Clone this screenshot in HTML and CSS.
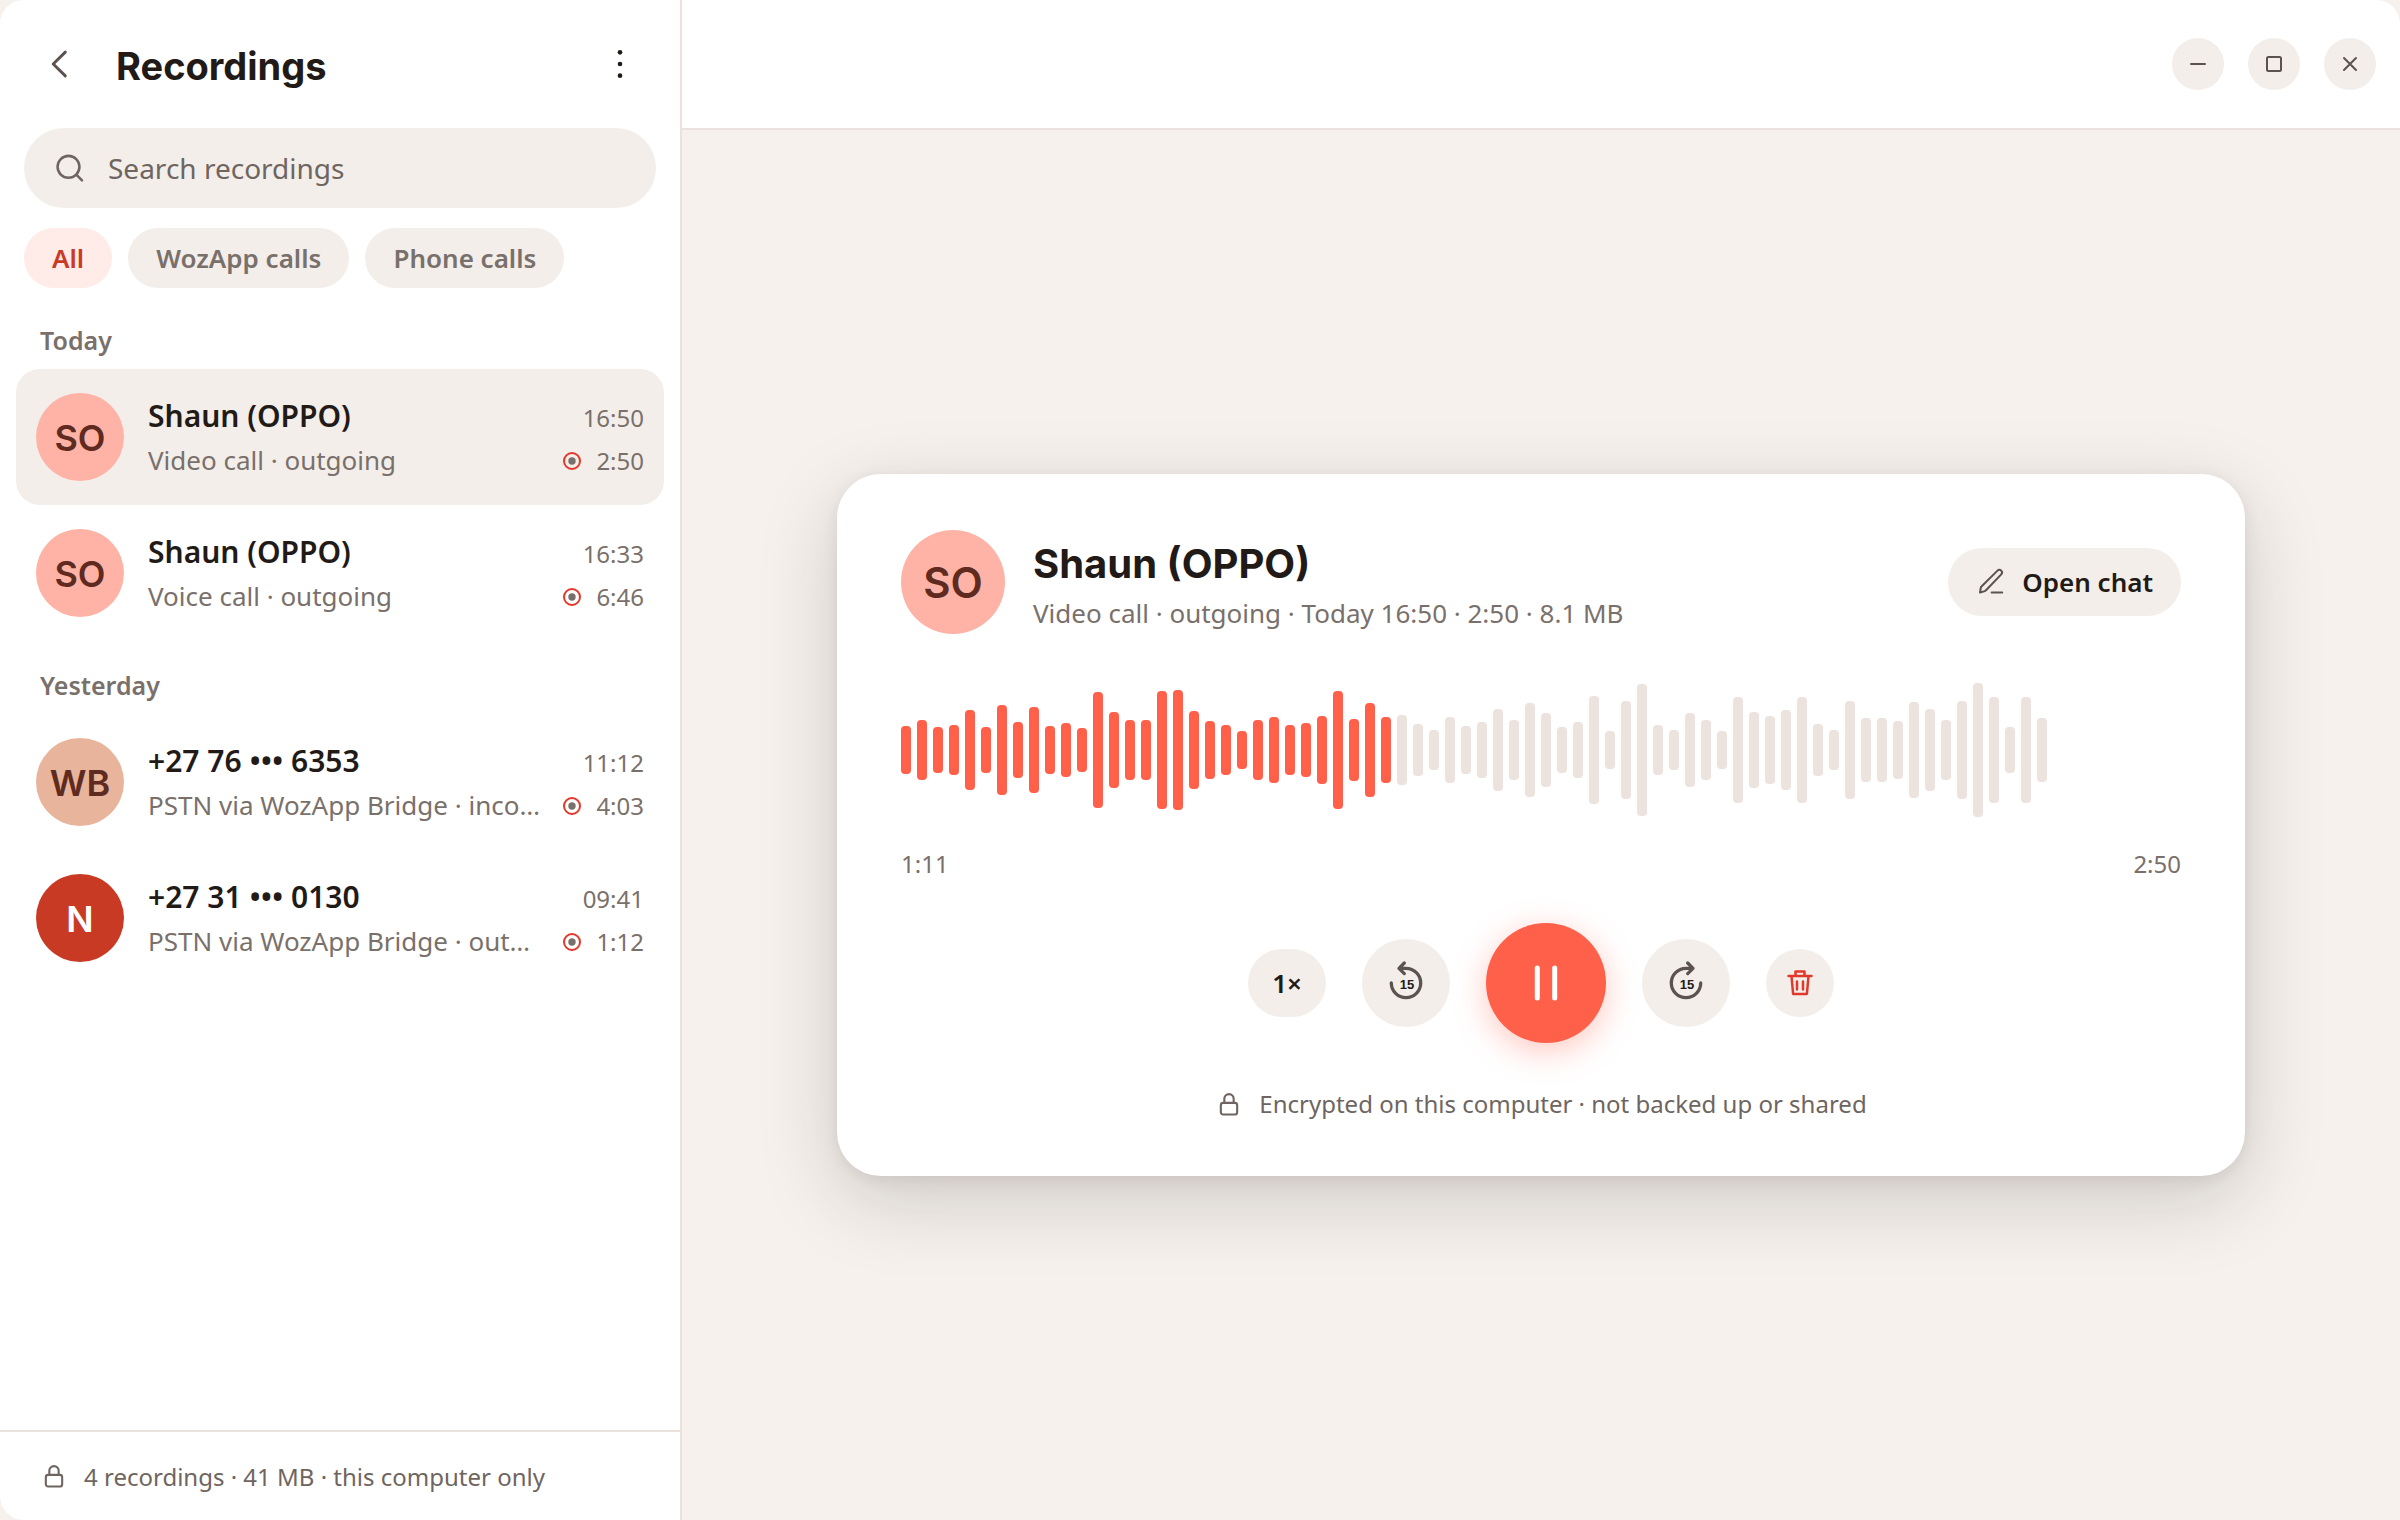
FILE: index.html
```html
<!DOCTYPE html>
<html lang="en">
<head>
<meta charset="utf-8">
<title>Recordings</title>
<meta name="viewport" content="width=device-width, initial-scale=1">
<link rel="stylesheet" href="styles.css">
</head>
<body>
<svg class="sprite" aria-hidden="true">
  <symbol id="lock" viewBox="0 0 24 24"><rect x="5" y="11" width="14" height="10" rx="2"/><path d="M8 11V7.500a4 4 0 0 1 8 0V11"/></symbol>
  <symbol id="record" viewBox="0 0 18 18"><circle cx="9" cy="9" r="8" fill="none" stroke="#e2382c" stroke-width="2"/><circle cx="9" cy="9" r="3.700" fill="currentColor" stroke="none"/></symbol>
</svg>
<div class="window">
  <aside class="sidebar">
    <header class="sidebar-header">
      <button class="icon-button" aria-label="Back"><svg class="icon icon-back" viewBox="0 0 24 24"><path d="M14.900 5.500 8.300 12l6.600 6.500"/></svg></button>
      <h1 class="title">Recordings</h1>
      <button class="icon-button" aria-label="More options"><svg class="icon icon-more" viewBox="0 0 24 24"><circle cx="12" cy="5" r="1.400"/><circle cx="12" cy="12" r="1.400"/><circle cx="12" cy="19" r="1.400"/></svg></button>
    </header>
    <label class="search">
      <svg class="icon icon-search" viewBox="0 0 24 24"><circle cx="11" cy="11.200" r="7.300"/><path d="m20 20.200-3.800-3.800"/></svg>
      <input class="search-input" type="search" placeholder="Search recordings" aria-label="Search recordings">
    </label>
    <div class="chips">
      <button class="chip chip-active">All</button>
      <button class="chip">WozApp calls</button>
      <button class="chip">Phone calls</button>
    </div>
    <div class="list">
      <h2 class="day">Today</h2>
      <button class="item item-selected">
        <span class="avatar">SO</span>
        <span class="item-body">
          <span class="line"><span class="name">Shaun (OPPO)</span><span class="time">16:50</span></span>
          <span class="line"><span class="detail">Video call · outgoing</span><span class="length"><svg class="record"><use href="#record"/></svg>2:50</span></span>
        </span>
      </button>
      <button class="item">
        <span class="avatar">SO</span>
        <span class="item-body">
          <span class="line"><span class="name">Shaun (OPPO)</span><span class="time">16:33</span></span>
          <span class="line"><span class="detail">Voice call · outgoing</span><span class="length"><svg class="record"><use href="#record"/></svg>6:46</span></span>
        </span>
      </button>
      <h2 class="day">Yesterday</h2>
      <button class="item">
        <span class="avatar avatar-sand">WB</span>
        <span class="item-body">
          <span class="line"><span class="name">+27 76 ••• 6353</span><span class="time">11:12</span></span>
          <span class="line"><span class="detail">PSTN via WozApp Bridge · incoming</span><span class="length"><svg class="record"><use href="#record"/></svg>4:03</span></span>
        </span>
      </button>
      <button class="item">
        <span class="avatar avatar-red">N</span>
        <span class="item-body">
          <span class="line"><span class="name">+27 31 ••• 0130</span><span class="time">09:41</span></span>
          <span class="line"><span class="detail">PSTN via WozApp Bridge · outgoing</span><span class="length"><svg class="record"><use href="#record"/></svg>1:12</span></span>
        </span>
      </button>
    </div>
    <footer class="sidebar-footer"><svg class="icon icon-lock"><use href="#lock"/></svg>4 recordings · 41 MB · this computer only</footer>
  </aside>
  <main class="main">
    <header class="titlebar">
      <button class="window-button" aria-label="Minimize"><svg class="icon icon-small" viewBox="0 0 20 20"><path d="M3 10h14"/></svg></button>
      <button class="window-button" aria-label="Maximize"><svg class="icon icon-small" viewBox="0 0 20 20"><rect x="3" y="3" width="14" height="14" rx="1.500"/></svg></button>
      <button class="window-button" aria-label="Close"><svg class="icon icon-small" viewBox="0 0 20 20"><path d="m4 4 12 12M16 4 4 16"/></svg></button>
    </header>
    <div class="stage">
      <section class="card">
        <header class="card-header">
          <span class="avatar avatar-large">SO</span>
          <div class="card-heading">
            <h2 class="card-title">Shaun (OPPO)</h2>
            <p class="card-detail">Video call · outgoing · Today 16:50 · 2:50 · 8.1 MB</p>
          </div>
          <button class="open-chat"><svg class="icon icon-pen" viewBox="0 0 24 24"><path d="M3.200 20.400l.6-3.600c.1-.6.4-1 .8-1.400L17.200 2.900a2 2 0 0 1 3 0 2.200 2.200 0 0 1 0 3L8.200 18.400c-.5.5-1 .9-1.700 1.100zM12.500 20.400h8.500"/></svg>Open chat</button>
        </header>
        <div class="wave" id="wave" role="img" aria-label="Waveform"></div>
        <div class="times"><span>1:11</span><span>2:50</span></div>
        <div class="controls">
          <button class="control control-speed">1×</button>
          <button class="control control-skip" aria-label="Back 15 seconds"><svg class="icon icon-skip" viewBox="0 0 48 48"><path d="M9.300 24A14.700 14.700 0 1 0 24 9.300H17M22.300 4 17 9.300l5.300 5.300"/><text x="25" y="30">15</text></svg></button>
          <button class="control control-play" aria-label="Pause"><svg class="icon icon-pause" viewBox="0 0 48 48"><path d="M15.300 9v30M32.700 9v30"/></svg></button>
          <button class="control control-skip" aria-label="Forward 15 seconds"><svg class="icon icon-skip" viewBox="0 0 48 48"><path d="M38.700 24A14.700 14.700 0 1 1 24 9.300h7M25.700 4 31 9.300l-5.300 5.300"/><text x="25" y="30">15</text></svg></button>
          <button class="control control-delete" aria-label="Delete"><svg class="icon icon-trash" viewBox="0 0 28 28"><path d="M2.500 7h23M9.500 7V2.500h9V7M5.500 7l1.600 18h13.800l1.600-18M11 12.500v8M17 12.500v8"/></svg></button>
        </div>
        <p class="privacy"><svg class="icon icon-lock"><use href="#lock"/></svg>Encrypted on this computer · not backed up or shared</p>
      </section>
    </div>
  </main>
</div>
<script src="wave.js"></script>
</body>
</html>
```
FILE: styles.css
```css
* { box-sizing: border-box; }

:root {
  --ink: #211a17;
  --muted: #7a706b;
  --icon: #5c524e;
  --soft: #f3eeea;
  --line: #ebe2de;
  --canvas: #f6f1ed;
  --coral: #ff604a;
}

body {
  margin: 0;
  background: var(--canvas);
  color: var(--ink);
  font-family: "Noto Sans", sans-serif;
  font-size: 24px;
}

h1, h2, p { margin: 0; }

button {
  border: 0;
  padding: 0;
  background: none;
  color: inherit;
  font: inherit;
}

.sprite { position: absolute; width: 0; height: 0; }

.icon {
  flex: none;
  fill: none;
  stroke: currentColor;
  stroke-width: 2;
  stroke-linecap: round;
  stroke-linejoin: round;
}

.window {
  display: flex;
  min-height: 100vh;
  border-radius: 24px;
  overflow: hidden;
}

/* Sidebar */
.sidebar {
  flex: none;
  display: flex;
  flex-direction: column;
  width: 682px;
  border-right: 2px solid var(--line);
  background: #fff;
}

.sidebar-header {
  display: flex;
  align-items: center;
  height: 128px;
  padding: 0 24px;
}

.icon-button {
  display: flex;
  align-items: center;
  justify-content: center;
  width: 72px;
  height: 72px;
  color: var(--icon);
}

.icon-back { width: 44px; height: 44px; stroke-width: 1.6; }
.icon-more { width: 40px; height: 40px; fill: var(--ink); stroke: none; }

.title {
  flex: 1;
  padding: 3px 0 0 20px;
  font: 700 38px/48px Inter, sans-serif;
}

.search {
  display: flex;
  align-items: center;
  gap: 20px;
  height: 80px;
  margin: 0 24px;
  padding: 0 28px;
  border-radius: 40px;
  background: var(--soft);
  color: #6f6560;
}

.icon-search { width: 36px; height: 36px; stroke-width: 1.7; }

.search-input {
  flex: 1;
  min-width: 0;
  border: 0;
  padding: 0;
  background: none;
  color: inherit;
  font: inherit;
  font-size: 28px;
}

.search-input::placeholder { color: inherit; opacity: 1; }

.chips {
  display: flex;
  gap: 16px;
  padding: 20px 24px 8px;
}

.chip {
  height: 60px;
  padding: 0 28px;
  border-radius: 30px;
  background: var(--soft);
  color: var(--muted);
  font-size: 26px;
  font-weight: 600;
}

.chip-active { background: #ffebe8; color: #c93a25; }

.list { flex: 1; padding: 0 16px; }

.day {
  padding: 28px 24px 12px;
  color: var(--muted);
  font-size: 25px;
  font-weight: 600;
  line-height: 33px;
}

.item {
  display: flex;
  align-items: center;
  gap: 24px;
  width: 100%;
  height: 136px;
  padding: 0 20px;
  border-radius: 24px;
  text-align: left;
}

.item-selected { background: var(--soft); }

.avatar {
  flex: none;
  display: flex;
  align-items: center;
  justify-content: center;
  width: 88px;
  height: 88px;
  padding-top: 2px;
  border-radius: 50%;
  background: #ffb3a6;
  color: #5f2a20;
  font: 600 36px/44px Inter, sans-serif;
}

.avatar-sand { background: #e8b49c; }
.avatar-red { background: #c93a25; color: #fff; }
.avatar-large { width: 104px; height: 104px; font-size: 42px; }

.item-body { flex: 1; min-width: 0; padding-top: 3px; }

.line {
  display: flex;
  align-items: baseline;
  justify-content: space-between;
  gap: 20px;
  line-height: 42px;
}

.name { font-size: 30px; font-weight: 600; }
.time, .length { flex: none; color: var(--muted); font-size: 24px; }

.detail {
  overflow: hidden;
  color: var(--muted);
  font-size: 26px;
  text-overflow: ellipsis;
  white-space: nowrap;
}

.length { display: flex; align-items: center; gap: 15px; }
.record { width: 18px; height: 18px; }

.sidebar-footer {
  display: flex;
  align-items: center;
  gap: 16px;
  height: 90px;
  padding: 0 40px;
  border-top: 2px solid var(--line);
  color: #6f6560;
}

.icon-lock { width: 28px; height: 28px; stroke-width: 1.8; }

/* Player */
.main {
  flex: 1;
  display: flex;
  flex-direction: column;
  min-width: 0;
}

.titlebar {
  display: flex;
  align-items: center;
  justify-content: flex-end;
  gap: 24px;
  height: 130px;
  padding: 0 24px;
  border-bottom: 2px solid var(--line);
  background: #fff;
}

.window-button {
  display: flex;
  align-items: center;
  justify-content: center;
  width: 52px;
  height: 52px;
  border-radius: 50%;
  background: var(--soft);
  color: var(--icon);
}

.icon-small { width: 20px; height: 20px; }

.stage {
  flex: 1;
  display: flex;
  align-items: center;
  justify-content: center;
  padding: 48px;
}

.card {
  width: 100%;
  max-width: 1408px;
  padding: 56px 64px 54px;
  border-radius: 44px;
  background: #fff;
  box-shadow: 0 24px 80px rgba(33, 26, 23, 0.18), 0 4px 16px rgba(33, 26, 23, 0.08);
}

.card-header {
  display: flex;
  align-items: center;
  gap: 28px;
}

.card-heading { flex: 1; padding-top: 6px; }
.card-title { font: 700 40px/56px Inter, sans-serif; }
.card-detail { color: var(--muted); font-size: 26px; line-height: 42px; }

.open-chat {
  display: flex;
  align-items: center;
  gap: 16px;
  height: 68px;
  padding: 0 28px;
  border-radius: 34px;
  background: var(--soft);
  font-size: 26px;
  font-weight: 600;
}

.icon-pen { width: 30px; height: 30px; color: var(--icon); stroke-width: 1.6; }

.wave {
  display: flex;
  align-items: center;
  gap: 6px;
  height: 144px;
  margin-top: 44px;
  overflow: hidden;
}

.bar {
  flex: none;
  width: 10px;
  border-radius: 4px;
  background: #ece3de;
}

.bar-played { background: var(--coral); }

.times {
  display: flex;
  justify-content: space-between;
  margin-top: 24px;
  color: var(--muted);
  line-height: 36px;
}

.controls {
  display: flex;
  align-items: center;
  justify-content: center;
  gap: 36px;
  margin-top: 41px;
}

.control {
  display: flex;
  align-items: center;
  justify-content: center;
  border-radius: 60px;
  background: var(--soft);
}

.control-speed {
  height: 68px;
  padding: 0 24px;
  font-size: 26px;
  font-weight: 600;
}

.control-skip { width: 88px; height: 88px; color: var(--icon); }
.control-delete { width: 68px; height: 68px; color: #e2382c; }

.control-play {
  width: 120px;
  height: 120px;
  background: var(--coral);
  color: #fff;
  box-shadow: 0 8px 32px rgba(255, 96, 74, 0.35);
}

.icon-skip { width: 48px; height: 48px; stroke-width: 3.3; }

.icon-skip text {
  fill: var(--ink);
  stroke: none;
  font-family: "Liberation Sans", sans-serif;
  font-size: 13px;
  font-weight: 700;
  text-anchor: middle;
}

.icon-pause { width: 48px; height: 48px; stroke-width: 5; }
.icon-trash { width: 28px; height: 28px; stroke-width: 2.5; }

.privacy {
  display: flex;
  align-items: center;
  justify-content: center;
  gap: 16px;
  margin-top: 43px;
  color: #6f6560;
  line-height: 36px;
}
```
FILE: wave.js
```js
const levels = [
  48, 60, 46, 50, 80, 46, 90, 56, 86, 48, 54, 44, 116, 76, 60, 60, 118, 120,
  78, 58, 50, 38, 60, 66, 50, 54, 68, 118, 62, 94, 66, 70, 52, 40, 66, 48,
  56, 82, 60, 94, 74, 46, 56, 108, 38, 98, 132, 50, 40, 74, 60, 38, 106, 76,
  68, 80, 106, 52, 40, 98, 64, 64, 58, 96, 82, 60, 98, 134, 106, 46, 106, 64
];
const played = 31;
const wave = document.getElementById("wave");

levels.forEach((level, i) => {
  const bar = document.createElement("span");
  bar.className = i < played ? "bar bar-played" : "bar";
  bar.style.height = level + "px";
  wave.append(bar);
});
```
